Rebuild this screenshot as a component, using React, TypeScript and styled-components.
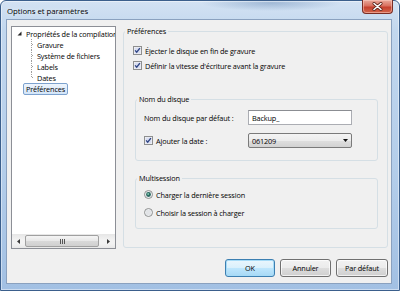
import React from 'react';
import styled, { createGlobalStyle } from 'styled-components';

const FONT = `'Open Sans', 'Noto Sans', sans-serif`;

const GlobalStyle = createGlobalStyle`
  html, body { margin: 0; padding: 0; background: #fff; }
  body { font-family: ${FONT}; font-size: 7.3px; letter-spacing: -0.15px; color: #000; }
  * { box-sizing: border-box; }
`;

type TreeNode = {
  label: string;
  level: number;
  expander?: boolean;
  guide?: 'mid' | 'last';
  selected?: boolean;
};

const treeItems: TreeNode[] = [
  { label: 'Propriétés de la compilation', level: 0, expander: true },
  { label: 'Gravure', level: 1, guide: 'mid' },
  { label: 'Système de fichiers', level: 1, guide: 'mid' },
  { label: 'Labels', level: 1, guide: 'mid' },
  { label: 'Dates', level: 1, guide: 'last' },
  { label: 'Préférences', level: 0, selected: true },
];

const CheckBox: React.FC<{ checked?: boolean }> = ({ checked }) => (
  <BoxGlyph width="9" height="9" viewBox="0 0 9 9">
    <rect x="0.5" y="0.5" width="8" height="8" fill="#f6f6f6" stroke="#8e8f8f" />
    <rect x="1.5" y="1.5" width="6" height="6" fill="#d9def0" />
    {checked && <path d="M2.1 4.4 L3.7 6.2 L6.9 2.1" stroke="#2f4585" strokeWidth="1.4" fill="none" />}
  </BoxGlyph>
);

const Radio: React.FC<{ checked?: boolean }> = ({ checked }) => (
  <BoxGlyph width="9" height="9" viewBox="0 0 9 9">
    <circle cx="4.5" cy="4.5" r="4" fill="#eef0f2" stroke="#8e8f8f" />
    <circle cx="4.5" cy="4.5" r="3" fill="#e2e4e7" />
    {checked && (
      <>
        <circle cx="4.5" cy="4.5" r="2.4" fill="#2b6a61" />
        <circle cx="4.2" cy="4.1" r="1" fill="#7fc3ae" />
      </>
    )}
  </BoxGlyph>
);

const TreeGuide: React.FC<{ kind: 'mid' | 'last' }> = ({ kind }) => (
  <svg width="7" height="11" viewBox="0 0 7 11">
    <line x1="4.5" y1="0" x2="4.5" y2={kind === 'mid' ? 11 : 6} stroke="#a0a0a0" strokeDasharray="1 1" />
    <line x1="5" y1="5.5" x2="7" y2="5.5" stroke="#a0a0a0" strokeDasharray="1 1" />
  </svg>
);

export default function App() {
  return (
    <>
      <GlobalStyle />
      <Window>
        <TitleBar>
          <Title>Options et paramètres</Title>
          <CloseButton aria-label="Fermer">
            <svg width="11" height="9" viewBox="0 0 11 9">
              <path d="M2 1.5 L9 7.5 M9 1.5 L2 7.5" stroke="#5a2219" strokeWidth="3" strokeLinecap="round" />
              <path d="M2 1.5 L9 7.5 M9 1.5 L2 7.5" stroke="#ffffff" strokeWidth="1.6" strokeLinecap="round" />
            </svg>
          </CloseButton>
        </TitleBar>

        <Client>
          <MainRow>
            <TreePanel>
              <TreeList>
                {treeItems.map((item) => (
                  <TreeRow key={item.label} $level={item.level}>
                    <Twisty>
                      {item.expander && (
                        <svg width="7" height="11" viewBox="0 0 7 11">
                          <path d="M5.5 3.5 L5.5 7.5 L1.5 7.5 Z" fill="#262626" />
                        </svg>
                      )}
                      {item.guide && <TreeGuide kind={item.guide} />}
                    </Twisty>
                    <TreeLabel $selected={item.selected}>{item.label}</TreeLabel>
                  </TreeRow>
                ))}
              </TreeList>
              <HScroll>
                <ScrollArrow $w={13}>
                  <svg width="3" height="5" viewBox="0 0 3 5">
                    <path d="M3 0 L0 2.5 L3 5 Z" fill="#3a3a3a" />
                  </svg>
                </ScrollArrow>
                <ScrollTrack>
                  <ScrollThumb>
                    <svg width="5" height="5" viewBox="0 0 5 5">
                      <path d="M0.5 0 V5 M2.5 0 V5 M4.5 0 V5" stroke="#555" strokeWidth="1" />
                    </svg>
                  </ScrollThumb>
                </ScrollTrack>
                <ScrollArrow $w={14}>
                  <svg width="3" height="5" viewBox="0 0 3 5">
                    <path d="M0 0 L3 2.5 L0 5 Z" fill="#3a3a3a" />
                  </svg>
                </ScrollArrow>
              </HScroll>
            </TreePanel>

            <PrefGroup>
              <Legend>Préférences</Legend>
              <PrefBody>
                <OptionRow>
                  <CheckBox checked />
                  <span>Éjecter le disque en fin de gravure</span>
                </OptionRow>
                <OptionRow>
                  <CheckBox checked />
                  <span>Définir la vitesse d'écriture avant la gravure</span>
                </OptionRow>

                <SubGroup $mt={20}>
                  <Legend>Nom du disque</Legend>
                  <DiskBody>
                    <FieldRow>
                      <FieldLabel>Nom du disque par défaut :</FieldLabel>
                      <TextInput defaultValue="Backup_" />
                    </FieldRow>
                    <FieldRow>
                      <FieldLabel>
                        <OptionRow as="span">
                          <CheckBox checked />
                          <span>Ajouter la date :</span>
                        </OptionRow>
                      </FieldLabel>
                      <Dropdown>
                        <span>061209</span>
                        <svg width="5" height="3" viewBox="0 0 5 3">
                          <path d="M0 0 H5 L2.5 3 Z" fill="#111" />
                        </svg>
                      </Dropdown>
                    </FieldRow>
                  </DiskBody>
                </SubGroup>

                <SubGroup $mt={10}>
                  <Legend>Multisession</Legend>
                  <RadioBody>
                    <OptionRow>
                      <Radio checked />
                      <span>Charger la dernière session</span>
                    </OptionRow>
                    <OptionRow>
                      <Radio />
                      <span>Choisir la session à charger</span>
                    </OptionRow>
                  </RadioBody>
                </SubGroup>
              </PrefBody>
            </PrefGroup>
          </MainRow>

          <ButtonRow>
            <DialogButton $w={50} $default>OK</DialogButton>
            <DialogButton $w={51}>Annuler</DialogButton>
            <DialogButton $w={52}>Par défaut</DialogButton>
          </ButtonRow>
        </Client>
      </Window>
    </>
  );
}

const Window = styled.div`
  width: 400px;
  height: 291px;
  display: flex;
  flex-direction: column;
  padding: 0 7px 6px 5px;
  border: 1px solid #3b5f8c;
  border-radius: 6px 6px 0 0;
  background:
    radial-gradient(ellipse 70px 8px at 270px 2px, rgba(70, 110, 160, 0.35), transparent),
    linear-gradient(180deg, #d3e2f3 0%, #c2d7ee 10%, #b3cdea 60%, #a2c0e3 100%);
  box-shadow: inset 0 0 0 1px rgba(255, 255, 255, 0.45);
`;

const TitleBar = styled.div`
  height: 18px;
  display: flex;
  align-items: flex-start;
  justify-content: space-between;
`;

const Title = styled.div`
  margin: 5px 0 0 1px;
  font-size: 7.8px;
  line-height: 11px;
  letter-spacing: -0.05px;
  color: #000;
  text-shadow: 0 0 4px rgba(255, 255, 255, 0.9);
`;

const CloseButton = styled.div`
  width: 31px;
  height: 14px;
  margin: -1px -1px 0 0;
  display: flex;
  align-items: center;
  justify-content: center;
  border: 1px solid #7a2e25;
  border-top: none;
  border-radius: 0 0 4px 4px;
  background: linear-gradient(180deg, #e9a99b 0%, #d9705f 45%, #c6402e 55%, #d2674c 100%);
  box-shadow: inset 0 0 0 1px rgba(255, 210, 200, 0.5);
`;

const Client = styled.div`
  flex: 1;
  display: flex;
  flex-direction: column;
  padding: 6px 3px 6px 4px;
  background: #f0f0f0;
  border: 1px solid #8aa1bf;
`;

const MainRow = styled.div`
  height: 223px;
  display: flex;
  gap: 7px;
`;

const TreePanel = styled.div`
  width: 105px;
  display: flex;
  flex-direction: column;
  background: #fff;
  border: 1px solid #8c8f96;
`;

const TreeList = styled.div`
  flex: 1;
  padding-top: 1px;
  overflow: hidden;
  white-space: nowrap;
`;

const TreeRow = styled.div<{ $level: number }>`
  height: 11px;
  display: flex;
  align-items: center;
  padding-left: ${(p) => 4 + p.$level * 11}px;
`;

const Twisty = styled.span`
  width: 7px;
  height: 11px;
  flex: none;
  display: flex;
`;

const TreeLabel = styled.span<{ $selected?: boolean }>`
  height: 12px;
  line-height: 10px;
  padding: 0 2px;
  border: 1px solid ${(p) => (p.$selected ? '#7da2ce' : 'transparent')};
  border-radius: 2px;
  background: ${(p) => (p.$selected ? 'linear-gradient(180deg, #eef5fd, #d3e5f9)' : 'transparent')};
`;

const HScroll = styled.div`
  height: 14px;
  display: flex;
  background: linear-gradient(180deg, #e6e6e6, #f2f2f2 40%, #f2f2f2 70%, #e8e8e8);
`;

const ScrollArrow = styled.div<{ $w: number }>`
  width: ${(p) => p.$w}px;
  display: flex;
  align-items: center;
  justify-content: center;
`;

const ScrollTrack = styled.div`
  flex: 1;
  display: flex;
  align-items: center;
`;

const ScrollThumb = styled.div`
  width: 74px;
  height: 12px;
  display: flex;
  align-items: center;
  justify-content: center;
  border: 1px solid #a0a0a0;
  border-radius: 2px;
  background: linear-gradient(180deg, #f5f5f5 0%, #e7e7e7 50%, #d9d9d9 51%, #d0d0d0 100%);
`;

const PrefGroup = styled.fieldset`
  width: 265px;
  height: 222px;
  margin: 0;
  padding: 0;
  min-width: 0;
  border: 1px solid #d5dfe5;
  border-radius: 3px;
`;

const SubGroup = styled.fieldset<{ $mt: number }>`
  margin: ${(p) => p.$mt}px 0 0 2px;
  padding: 0;
  min-width: 0;
  border: 1px solid #d5dfe5;
  border-radius: 3px;
`;

const Legend = styled.legend`
  margin-left: 1px;
  padding: 0 2px;
  line-height: 11px;
  color: #000;
`;

const PrefBody = styled.div`
  padding: 7px 9px 0 9px;
  display: flex;
  flex-direction: column;
  gap: 2px;
`;

const OptionRow = styled.label`
  height: 13px;
  display: flex;
  align-items: center;
  gap: 2px;
  white-space: nowrap;
`;

const BoxGlyph = styled.svg`
  flex: none;
  margin-right: 1px;
`;

const DiskBody = styled.div`
  padding: 5px 8px 12px 8px;
  display: flex;
  flex-direction: column;
  gap: 8px;
`;

const FieldRow = styled.div`
  height: 15px;
  display: flex;
  align-items: center;
`;

const FieldLabel = styled.span`
  width: 104px;
  flex: none;
  white-space: nowrap;
`;

const TextInput = styled.input`
  width: 104px;
  height: 15px;
  padding: 0 3px;
  font: inherit;
  letter-spacing: inherit;
  color: #000;
  background: #fff;
  border: 1px solid #abadb3;
  border-top-color: #8b8d92;
  outline: none;
`;

const Dropdown = styled.div`
  width: 104px;
  height: 15px;
  display: flex;
  align-items: center;
  justify-content: space-between;
  padding: 0 3px 0 3px;
  border: 1px solid #7a7a7a;
  border-radius: 2px;
  background: linear-gradient(180deg, #f4f4f4 0%, #ececec 50%, #dfdfdf 51%, #d2d2d2 100%);
`;

const RadioBody = styled.div`
  padding: 4px 8px 9px 8px;
  display: flex;
  flex-direction: column;
  gap: 5px;
`;

const ButtonRow = styled.div`
  margin-top: 10px;
  height: 18px;
  display: flex;
  justify-content: flex-end;
  gap: 5px;
`;

const DialogButton = styled.button<{ $w: number; $default?: boolean }>`
  width: ${(p) => p.$w}px;
  height: 18px;
  padding: 0;
  font: inherit;
  letter-spacing: inherit;
  color: #000;
  border-radius: 3px;
  border: 1px solid ${(p) => (p.$default ? '#3c7fb1' : '#707070')};
  background: ${(p) =>
    p.$default
      ? 'linear-gradient(180deg, #eaf6fd 0%, #d9f0fc 50%, #bee6fd 51%, #a7d9f5 100%)'
      : 'linear-gradient(180deg, #f2f2f2 0%, #ebebeb 50%, #dddddd 51%, #cfcfcf 100%)'};
  box-shadow: inset 0 0 0 1px ${(p) => (p.$default ? '#a6dbf7' : 'rgba(255,255,255,0.7)')};
`;
